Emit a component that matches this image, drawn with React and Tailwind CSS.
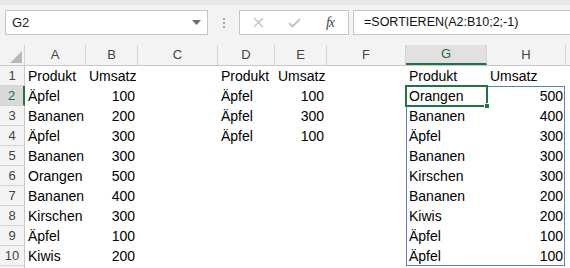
import React from "react";

const cols = [
  { key: "A", w: 61 },
  { key: "B", w: 52 },
  { key: "C", w: 80 },
  { key: "D", w: 57 },
  { key: "E", w: 52 },
  { key: "F", w: 79 },
  { key: "G", w: 81 },
  { key: "H", w: 79 },
  { key: "", w: 40 },
];

// row data: [A, B, C, D, E, F, G, H]
const rows = [
  ["Produkt", "Umsatz", "", "Produkt", "Umsatz", "", "Produkt", "Umsatz"],
  ["Äpfel", 100, "", "Äpfel", 100, "", "Orangen", 500],
  ["Bananen", 200, "", "Äpfel", 300, "", "Bananen", 400],
  ["Äpfel", 300, "", "Äpfel", 100, "", "Äpfel", 300],
  ["Bananen", 300, "", "", "", "", "Bananen", 300],
  ["Orangen", 500, "", "", "", "", "Kirschen", 300],
  ["Bananen", 400, "", "", "", "", "Bananen", 200],
  ["Kirschen", 300, "", "", "", "", "Kiwis", 200],
  ["Äpfel", 100, "", "", "", "", "Äpfel", 100],
  ["Kiwis", 200, "", "", "", "", "Äpfel", 100],
  ["", "", "", "", "", "", "", ""],
];

function FormulaBar() {
  return (
    <div className="h-[45px] bg-[#f3f3f3] border-t-[5px] border-[#e8e8e8] flex items-start pt-[5px] pl-[5px]">
      {/* Name box */}
      <div className="w-[203px] h-[25px] bg-white border border-[#c6c6c6] flex items-center justify-between pl-[6px] pr-[6px]">
        <span className="text-[13px] text-[#222]">G2</span>
        <svg width="9" height="5" viewBox="0 0 9 5">
          <polygon points="0,0 9,0 4.5,5" fill="#6d6d6d" />
        </svg>
      </div>

      {/* dots */}
      <div className="w-[31px] h-[25px] flex flex-col items-center justify-center gap-[2px]">
        <div className="w-[2px] h-[2px] bg-[#a6a6a6]" />
        <div className="w-[2px] h-[2px] bg-[#a6a6a6]" />
        <div className="w-[2px] h-[2px] bg-[#a6a6a6]" />
      </div>

      {/* cancel / enter / fx */}
      <div className="w-[110px] h-[25px] bg-white border border-[#c6c6c6] flex items-center">
        <div className="w-[36px] flex justify-center">
          <svg width="11" height="11" viewBox="0 0 11 11">
            <path d="M1 1 L10 10 M10 1 L1 10" stroke="#c2c2c2" strokeWidth="1.3" />
          </svg>
        </div>
        <div className="w-[36px] flex justify-center">
          <svg width="13" height="10" viewBox="0 0 13 10">
            <path d="M1 5 L4.5 8.5 L12 1" stroke="#c2c2c2" strokeWidth="1.8" fill="none" />
          </svg>
        </div>
        <div className="flex-1 flex justify-center">
          <span className="font-['Liberation_Serif',serif] italic text-[14px] text-[#444] tracking-[-1px]">fx</span>
        </div>
      </div>

      {/* formula input */}
      <div className="ml-[4px] flex-1 h-[25px] bg-white border border-r-0 border-[#c6c6c6] flex items-center pl-[10px]">
        <span className="text-[12.5px] text-[#111]">=SORTIEREN(A2:B10;2;-1)</span>
      </div>
    </div>
  );
}

function ColumnHeader() {
  return (
    <div className="flex h-[21px] border-b border-[#c8c8c8]">
      <div className="w-[25px] shrink-0 bg-[#f3f3f3] border-r border-[#d4d4d4] relative">
        <svg className="absolute left-0 top-0" width="25" height="20" viewBox="0 0 25 20">
          <polygon points="10,18 22,18 22,6" fill="#b9b9b9" />
        </svg>
      </div>
      {cols.map((c, i) => {
        const sel = c.key === "G";
        return (
          <div
            key={i}
            style={{ width: c.w }}
            className={
              sel
                ? "shrink-0 bg-[#e1e1e1] border-r border-[#d4d4d4] border-b-2 border-b-[#217346] flex items-center justify-center text-[13px] text-[#1e6b40]"
                : "shrink-0 bg-[#f3f3f3] border-r border-[#d4d4d4] flex items-center justify-center text-[13px] text-[#444]"
            }
          >
            {c.key}
          </div>
        );
      })}
    </div>
  );
}

function Row({ idx, data }) {
  const sel = idx === 2;
  return (
    <div className="flex h-[20px]">
      <div
        className={
          sel
            ? "w-[25px] shrink-0 bg-[#d9d9d9] border-r-2 border-[#217346] border-b border-b-[#d4d4d4] flex items-center justify-center text-[13px] text-[#1e6b40]"
            : "w-[25px] shrink-0 bg-[#f3f3f3] border-r border-[#c8c8c8] border-b border-b-[#d4d4d4] flex items-center justify-center text-[13px] text-[#444]"
        }
      >
        {idx <= 10 ? idx : ""}
      </div>
      {cols.map((c, i) => {
        const v = data[i] ?? "";
        const num = typeof v === "number";
        return (
          <div
            key={i}
            style={{ width: c.w }}
            className={
              num
                ? "shrink-0 px-[3px] flex items-center justify-end whitespace-nowrap text-[14px] text-black"
                : "shrink-0 px-[3px] flex items-center whitespace-nowrap overflow-visible text-[14px] text-black"
            }
          >
            {v}
          </div>
        );
      })}
    </div>
  );
}

export default function App() {
  return (
    <div className="relative w-[570px] h-[268px] overflow-hidden bg-white font-['Liberation_Sans',Arial,sans-serif]">
      <FormulaBar />
      <ColumnHeader />
      {rows.map((r, i) => (
        <Row key={i} idx={i + 1} data={r} />
      ))}

      {/* spill range G2:H10 */}
      <div className="absolute left-[406px] top-[86px] w-[159px] h-[180px] border border-[#5b7fc0] pointer-events-none" />
      {/* active cell G2 */}
      <div className="absolute left-[405px] top-[85px] w-[83px] h-[22px] border-2 border-[#217346] pointer-events-none" />
      <div className="absolute left-[484px] top-[103px] w-[6px] h-[6px] bg-[#217346] border border-white pointer-events-none" />
    </div>
  );
}
